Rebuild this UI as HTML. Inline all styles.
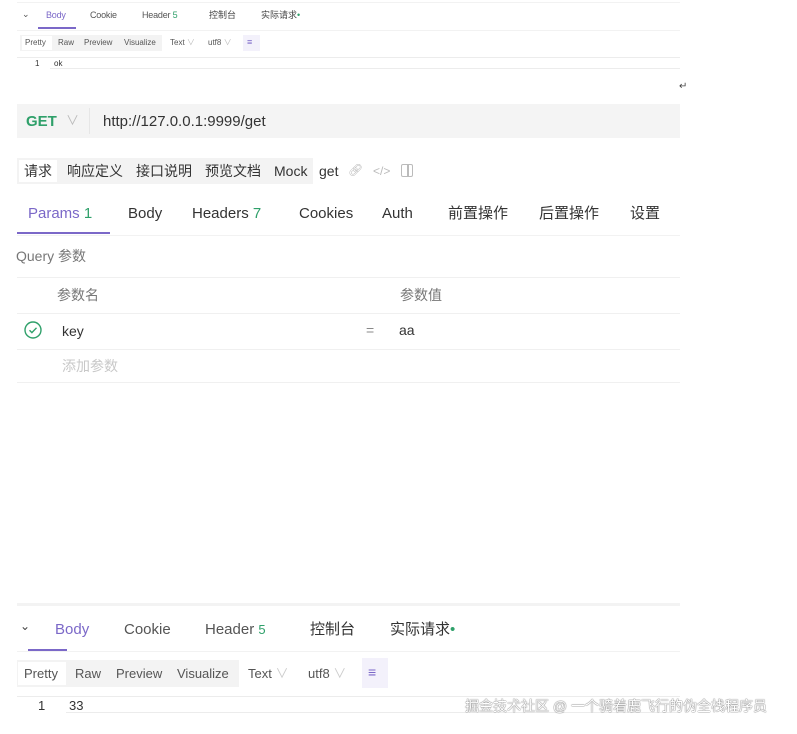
<!DOCTYPE html>
<html><head><meta charset="utf-8"><style>
*{margin:0;padding:0;box-sizing:border-box}
body{width:797px;height:734px;background:#fff;position:relative;overflow:hidden;font-family:"Liberation Sans","Noto Sans CJK SC",sans-serif;color:#333}
.a{position:absolute;white-space:nowrap;line-height:1}
.hl{position:absolute;height:1px;background:#ececec}
.p{color:#7b68c8}.g{color:#2fa06a}
</style></head><body>
<div class="hl" style="left:17px;top:2px;width:663px;background:#f2f2f2"></div>
<div class="a" style="left:22px;top:10px;font-size:9px;color:#555">⌄</div>
<div class="a p" style="left:46px;top:11px;font-size:9px;letter-spacing:-0.2px">Body</div>
<div class="a" style="left:38px;top:27px;width:38px;height:2px;background:#7b68c8"></div>
<div class="a" style="left:90px;top:11px;font-size:9px;color:#555;letter-spacing:-0.2px">Cookie</div>
<div class="a" style="left:142px;top:11px;font-size:9px;color:#555;letter-spacing:-0.2px">Header <span class="g">5</span></div>
<div class="a" style="left:209px;top:11px;font-size:9px;color:#444">控制台</div>
<div class="a" style="left:261px;top:11px;font-size:9px;color:#444">实际请求<span class="g">•</span></div>
<div class="hl" style="left:17px;top:30px;width:663px;background:#f2f2f2"></div>
<div class="a" style="left:20px;top:35px;width:142px;height:16px;background:#f3f3f3"></div>
<div class="a" style="left:22px;top:36px;width:30px;height:14px;background:#fff"></div>
<div class="a" style="left:25px;top:39px;font-size:8px;color:#555">Pretty</div>
<div class="a" style="left:58px;top:39px;font-size:8px;color:#555">Raw</div>
<div class="a" style="left:84px;top:39px;font-size:8px;color:#555">Preview</div>
<div class="a" style="left:124px;top:39px;font-size:8px;color:#555">Visualize</div>
<div class="a" style="left:170px;top:39px;font-size:8px;color:#555">Text <span style="color:#bbb">∨</span></div>
<div class="a" style="left:208px;top:39px;font-size:8px;color:#555">utf8 <span style="color:#bbb">∨</span></div>
<div class="a" style="left:243px;top:35px;width:17px;height:16px;background:#f3f1fb"></div>
<div class="a p" style="left:247px;top:38px;font-size:9px">≡</div>
<div class="hl" style="left:17px;top:57px;width:663px"></div>
<div class="a" style="left:35px;top:60px;font-size:8px;color:#333">1</div>
<div class="a" style="left:54px;top:60px;font-size:8px;color:#333">ok</div>
<div class="hl" style="left:50px;top:68px;width:630px"></div>
<div class="a" style="left:679px;top:82px;font-size:10px;color:#444">↵</div>

<div class="a" style="left:17px;top:104px;width:663px;height:34px;background:#f4f4f4"></div>
<div class="a g" style="left:26px;top:114px;font-size:15px;font-weight:bold">GET</div>
<div class="a" style="left:66px;top:114px;font-size:13px;color:#bbb">∨</div>
<div class="a" style="left:89px;top:108px;width:1px;height:26px;background:#e6e6e6"></div>
<div class="a" style="left:103px;top:114px;font-size:15px;color:#333">http://127.0.0.1:9999/get</div>

<div class="a" style="left:17px;top:158px;width:296px;height:26px;background:#f3f3f3"></div>
<div class="a" style="left:19px;top:160px;width:38px;height:22px;background:#fff"></div>
<div class="a" style="left:24px;top:164px;font-size:14px">请求</div>
<div class="a" style="left:67px;top:164px;font-size:14px">响应定义</div>
<div class="a" style="left:136px;top:164px;font-size:14px">接口说明</div>
<div class="a" style="left:205px;top:164px;font-size:14px">预览文档</div>
<div class="a" style="left:274px;top:164px;font-size:14px">Mock</div>
<div class="a" style="left:319px;top:164px;font-size:14px">get</div>
<div class="a" style="left:348px;top:164px;font-size:12px;color:#bbb">🔗︎</div>
<div class="a" style="left:373px;top:165px;font-size:12px;color:#bbb">&lt;/&gt;</div>
<div class="a" style="left:401px;top:164px;width:12px;height:13px;border:1.5px solid #bbb;border-radius:2px"></div>
<div class="a" style="left:407px;top:165px;width:1.5px;height:11px;background:#bbb"></div>

<div class="a p" style="left:28px;top:206px;font-size:15px">Params <span class="g">1</span></div>
<div class="a" style="left:128px;top:206px;font-size:15px">Body</div>
<div class="a" style="left:192px;top:206px;font-size:15px">Headers <span class="g">7</span></div>
<div class="a" style="left:299px;top:206px;font-size:15px">Cookies</div>
<div class="a" style="left:382px;top:206px;font-size:15px">Auth</div>
<div class="a" style="left:448px;top:206px;font-size:15px">前置操作</div>
<div class="a" style="left:539px;top:206px;font-size:15px">后置操作</div>
<div class="a" style="left:630px;top:206px;font-size:15px">设置</div>
<div class="a" style="left:17px;top:232px;width:93px;height:2px;background:#7b68c8"></div>
<div class="hl" style="left:17px;top:235px;width:663px;background:#f2f2f2"></div>

<div class="a" style="left:16px;top:249px;font-size:14px;color:#777">Query 参数</div>
<div class="hl" style="left:17px;top:277px;width:663px;background:#f0f0f0"></div>
<div class="a" style="left:57px;top:288px;font-size:14px;color:#777">参数名</div>
<div class="a" style="left:400px;top:288px;font-size:14px;color:#777">参数值</div>
<div class="hl" style="left:17px;top:313px;width:663px;background:#f0f0f0"></div>
<svg class="a" style="left:24px;top:321px" width="18" height="18" viewBox="0 0 18 18"><circle cx="9" cy="9" r="8" fill="none" stroke="#2fa06a" stroke-width="1.4"/><path d="M5.5 9.2l2.4 2.4 4.6-4.8" fill="none" stroke="#2fa06a" stroke-width="1.4"/></svg>
<div class="a" style="left:62px;top:324px;font-size:14px">key</div>
<div class="a" style="left:366px;top:323px;font-size:14px;color:#888">=</div>
<div class="a" style="left:399px;top:323px;font-size:14px">aa</div>
<div class="hl" style="left:17px;top:349px;width:663px;background:#f0f0f0"></div>
<div class="a" style="left:62px;top:359px;font-size:14px;color:#c8c8c8">添加参数</div>
<div class="hl" style="left:17px;top:382px;width:663px;background:#f0f0f0"></div>

<div class="hl" style="left:17px;top:603px;width:663px;height:3px;background:#f3f3f3"></div>
<div class="a" style="left:20px;top:620px;font-size:12px;color:#444">⌄</div>
<div class="a p" style="left:55px;top:622px;font-size:15px">Body</div>
<div class="a" style="left:28px;top:649px;width:39px;height:2px;background:#7b68c8"></div>
<div class="a" style="left:124px;top:622px;font-size:15px;color:#555">Cookie</div>
<div class="a" style="left:205px;top:622px;font-size:15px;color:#555">Header <span class="g" style="font-size:13px">5</span></div>
<div class="a" style="left:310px;top:622px;font-size:15px">控制台</div>
<div class="a" style="left:390px;top:622px;font-size:15px">实际请求<span class="g">•</span></div>
<div class="hl" style="left:17px;top:651px;width:663px;background:#f2f2f2"></div>
<div class="a" style="left:17px;top:660px;width:222px;height:27px;background:#f3f3f3"></div>
<div class="a" style="left:18px;top:662px;width:48px;height:23px;background:#fff"></div>
<div class="a" style="left:24px;top:667px;font-size:13px;color:#555">Pretty</div>
<div class="a" style="left:75px;top:667px;font-size:13px;color:#555">Raw</div>
<div class="a" style="left:116px;top:667px;font-size:13px;color:#555">Preview</div>
<div class="a" style="left:177px;top:667px;font-size:13px;color:#555">Visualize</div>
<div class="a" style="left:248px;top:667px;font-size:13px;color:#555">Text <span style="color:#ccc">∨</span></div>
<div class="a" style="left:308px;top:667px;font-size:13px;color:#555">utf8 <span style="color:#ccc">∨</span></div>
<div class="a" style="left:362px;top:658px;width:26px;height:30px;background:#f3f1fb"></div>
<div class="a p" style="left:368px;top:665px;font-size:14px">≡</div>
<div class="hl" style="left:17px;top:696px;width:663px"></div>
<div class="a" style="left:38px;top:699px;font-size:13px">1</div>
<div class="a" style="left:69px;top:699px;font-size:13px">33</div>
<div class="hl" style="left:66px;top:712px;width:614px"></div>
<div class="a" style="left:465px;top:699px;font-size:14px;color:#fff;text-shadow:0 0 1px #666,0 0 1px #666">掘金技术社区 @ 一个骑着鹿飞行的伪全栈程序员</div>
</body></html>
